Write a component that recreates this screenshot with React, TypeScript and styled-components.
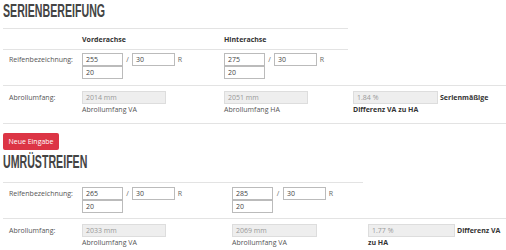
import React from 'react';
import styled, { createGlobalStyle } from 'styled-components';

const GlobalStyle = createGlobalStyle`
  body {
    margin: 0;
    background: #fff;
    font-family: 'Open Sans', 'Liberation Sans', sans-serif;
    font-size: 7px;
    color: #555;
  }
`;

const Page = styled.div`
  width: 506px;
  height: 250px;
  overflow: hidden;
  padding-left: 3px;
  box-sizing: border-box;
`;

const Heading = styled.h2<{ $top: number; $height: number }>`
  margin: 0;
  padding-top: ${(p) => p.$top}px;
  height: ${(p) => p.$height}px;
  box-sizing: border-box;
  font-family: 'Liberation Sans', 'Arial', sans-serif;
  font-weight: 700;
  font-size: 18px;
  line-height: 14px;
  color: #444;
  white-space: nowrap;

  span {
    display: inline-block;
    transform: scaleX(0.59);
    transform-origin: left center;
  }
`;

const Row = styled.div<{ $cols: string; $width?: number; $height: number; $last?: boolean }>`
  display: grid;
  grid-template-columns: ${(p) => p.$cols};
  width: ${(p) => (p.$width ? `${p.$width}px` : 'auto')};
  height: ${(p) => p.$height}px;
  border-top: 1px solid #e3e3e3;
  border-bottom: ${(p) => (p.$last ? '1px solid #e3e3e3' : 'none')};
  box-sizing: border-box;
`;

const Cell = styled.div<{ $pt: number }>`
  padding-top: ${(p) => p.$pt}px;
  display: flex;
  flex-direction: column;
  align-items: flex-start;
`;

const LabelCell = styled(Cell)`
  padding-left: 6px;
  line-height: 13px;
`;

const HeadCell = styled(Cell)`
  font-weight: 700;
  color: #333;
  line-height: 13px;
`;

const Line = styled.div`
  display: flex;
  align-items: center;
`;

const Input = styled.div<{ $w: number }>`
  width: ${(p) => p.$w}px;
  height: 13px;
  border: 1px solid #bbb;
  box-sizing: border-box;
  padding-left: 3px;
  line-height: 11px;
  font-size: 7px;
  color: #444;
  background: #fff;
`;

const ReadOnly = styled(Input)`
  border-color: #ddd;
  background: #eeeeee;
  color: #999;
`;

const Sep = styled.span<{ $w: number }>`
  width: ${(p) => p.$w}px;
  text-align: center;
  color: #666;
`;

const Caption = styled.div<{ $bold?: boolean }>`
  line-height: 12px;
  color: ${(p) => (p.$bold ? '#333' : '#555')};
  font-weight: ${(p) => (p.$bold ? 700 : 400)};
  white-space: nowrap;
`;

const DiffLine = styled.div`
  display: flex;
  align-items: center;
  gap: 2px;
`;

const Button = styled.button`
  display: block;
  margin-top: 9px;
  width: 56px;
  height: 17px;
  padding: 0;
  border: none;
  border-radius: 2px;
  background: #dc3545;
  color: #fff;
  font-family: 'Open Sans', 'Liberation Sans', sans-serif;
  font-size: 7px;
`;

type Tyre = { width: string; ratio: string; rim: string };

const TyreInputs: React.FC<{ t: Tyre; gap: number }> = ({ t, gap }) => (
  <>
    <Line>
      <Input $w={41}>{t.width}</Input>
      <Sep $w={gap}>/</Sep>
      <Input $w={43}>{t.ratio}</Input>
      <Sep $w={10}>R</Sep>
    </Line>
    <Input $w={41}>{t.rim}</Input>
  </>
);

export default function App() {
  const cols1 = '79px 142px 129px 1fr';
  const cols2 = '79px 150px 136px 1fr';
  return (
    <Page>
      <GlobalStyle />
      <Heading $top={4} $height={28}>
        <span>SERIENBEREIFUNG</span>
      </Heading>
      <Row $cols="79px 142px 1fr" $width={345} $height={21}>
        <Cell $pt={4} />
        <HeadCell $pt={4}>Vorderachse</HeadCell>
        <HeadCell $pt={4}>Hinterachse</HeadCell>
      </Row>
      <Row $cols="79px 142px 1fr" $width={345} $height={36}>
        <LabelCell $pt={3}>Reifenbezeichnung:</LabelCell>
        <Cell $pt={3}>
          <TyreInputs t={{ width: '255', ratio: '30', rim: '20' }} gap={9} />
        </Cell>
        <Cell $pt={3}>
          <TyreInputs t={{ width: '275', ratio: '30', rim: '20' }} gap={9} />
        </Cell>
      </Row>
      <Row $cols={cols1} $height={39} $last>
        <LabelCell $pt={5}>Abrollumfang:</LabelCell>
        <Cell $pt={5}>
          <ReadOnly $w={84}>2014 mm</ReadOnly>
          <Caption>Abrollumfang VA</Caption>
        </Cell>
        <Cell $pt={5}>
          <ReadOnly $w={84}>2051 mm</ReadOnly>
          <Caption>Abrollumfang HA</Caption>
        </Cell>
        <Cell $pt={5}>
          <DiffLine>
            <ReadOnly $w={85}>1.84 %</ReadOnly>
            <Caption $bold>Serienmäßige</Caption>
          </DiffLine>
          <Caption $bold>Differenz VA zu HA</Caption>
        </Cell>
      </Row>

      <Button>Neue Eingabe</Button>
      <Heading $top={5} $height={32}>
        <span>UMRÜSTREIFEN</span>
      </Heading>
      <Row $cols="79px 150px 1fr" $width={360} $height={36}>
        <LabelCell $pt={4}>Reifenbezeichnung:</LabelCell>
        <Cell $pt={4}>
          <TyreInputs t={{ width: '265', ratio: '30', rim: '20' }} gap={9} />
        </Cell>
        <Cell $pt={4}>
          <TyreInputs t={{ width: '285', ratio: '30', rim: '20' }} gap={10} />
        </Cell>
      </Row>
      <Row $cols={cols2} $height={40}>
        <LabelCell $pt={5}>Abrollumfang:</LabelCell>
        <Cell $pt={5}>
          <ReadOnly $w={84}>2033 mm</ReadOnly>
          <Caption>Abrollumfang VA</Caption>
        </Cell>
        <Cell $pt={5}>
          <ReadOnly $w={85}>2069 mm</ReadOnly>
          <Caption>Abrollumfang VA</Caption>
        </Cell>
        <Cell $pt={5}>
          <DiffLine>
            <ReadOnly $w={87}>1.77 %</ReadOnly>
            <Caption $bold>Differenz VA</Caption>
          </DiffLine>
          <Caption $bold>zu HA</Caption>
        </Cell>
      </Row>
    </Page>
  );
}
